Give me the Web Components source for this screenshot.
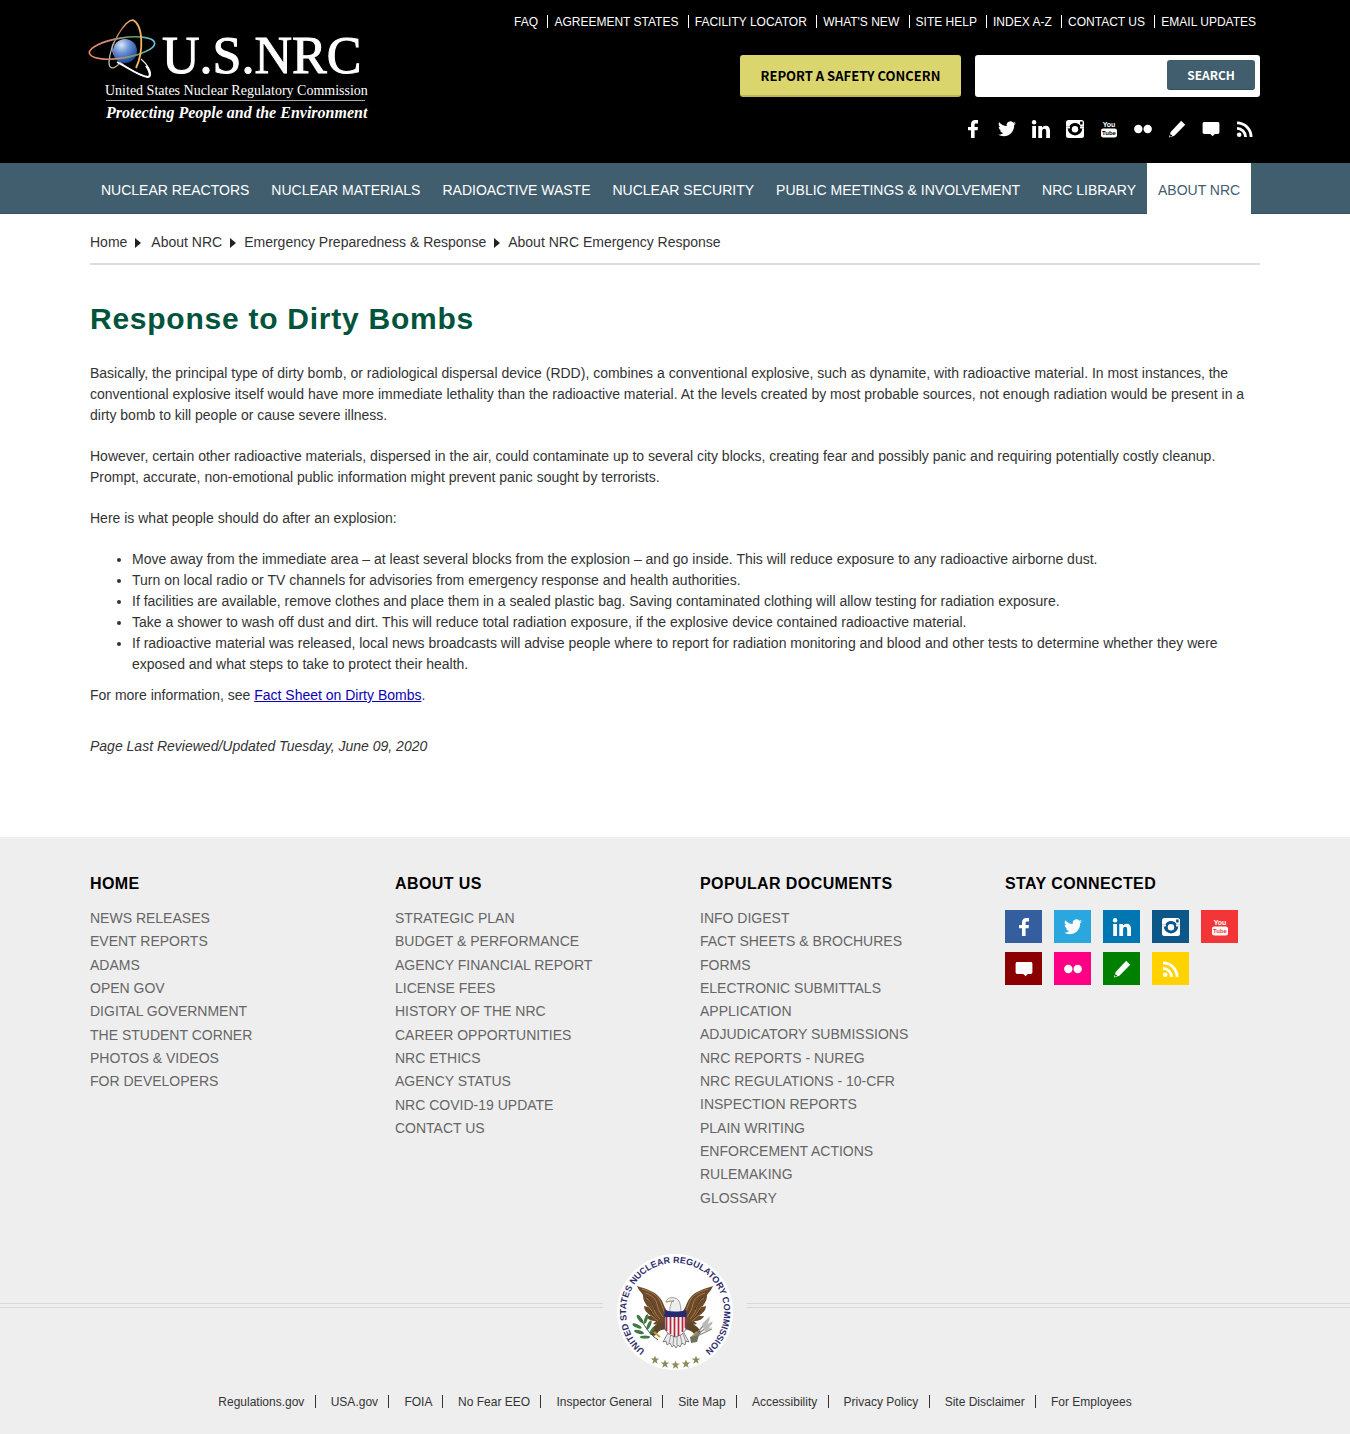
<!DOCTYPE html>
<html lang="en">
<head>
<meta charset="utf-8">
<title>NRC: Response to Dirty Bombs</title>
<meta name="viewport" content="width=device-width, initial-scale=1">
<style>
body{margin:0;background:#fff;color:#333;font:14px/21px "Liberation Sans",Arial,sans-serif}
</style>
</head>
<body>
<nrc-header></nrc-header>
<nrc-nav>
  <a href="#">NUCLEAR REACTORS</a><a href="#">NUCLEAR MATERIALS</a><a href="#">RADIOACTIVE WASTE</a><a href="#">NUCLEAR SECURITY</a><a href="#">PUBLIC MEETINGS &amp; INVOLVEMENT</a><a href="#">NRC LIBRARY</a><a href="#" aria-current="page">ABOUT NRC</a>
</nrc-nav>
<nrc-article></nrc-article>
<nrc-footer></nrc-footer>

<script>
const define = (name, html) => {
  const t = document.createElement('template');
  t.innerHTML = html;
  customElements.define(name, class extends HTMLElement {
    constructor() {
      super();
      this.attachShadow({mode: 'open'}).append(t.content.cloneNode(true));
    }
  });
};
const wrap = '.wrap{width:min(1170px,100% - 32px);margin:0 auto}';

/* Social icons, all on a 24-unit grid */
const icons = {
  facebook: ['Facebook', '<path d="M17 3v3.4h-2c-1 0-1.4.5-1.4 1.4V10H17l-.4 3.2h-3V21H10v-7.8H7V10h3V7.4C10 4.500 11.700 3 14.300 3z"/>'],
  twitter: ['Twitter', '<path d="M21 6.200c-.7.3-1.400.5-2.100.6.8-.5 1.300-1.200 1.600-2-.7.4-1.500.7-2.300.9A3.700 3.700 0 0 0 11.800 9C8.800 8.900 6.100 7.400 4.200 5.200c-1 1.700-.5 3.900 1.200 5-.6 0-1.200-.2-1.700-.5 0 1.800 1.200 3.300 2.900 3.700-.5.1-1.100.2-1.600.1.500 1.500 1.800 2.500 3.400 2.500A7.500 7.500 0 0 1 3 17.600C10.300 22 19.400 17.300 19.200 8.100c.7-.5 1.300-1.200 1.800-1.900z"/>'],
  linkedin: ['LinkedIn', '<circle cx="5.100" cy="5.200" r="2.200"/><path d="M3.200 9H7v12H3.200zM9.300 9H13v1.700c.8-1.300 2-2 3.700-2 3 0 4.300 2 4.300 5.100V21h-3.800v-6.500c0-1.700-.5-2.700-1.900-2.700-1.500 0-2.200 1-2.200 2.700V21H9.300z"/>'],
  instagram: ['Instagram', '<path fill-rule="evenodd" d="M5.500 3h13A2.500 2.500 0 0 1 21 5.500v4h-3.300A6.300 6.300 0 0 0 6.300 9.500H3v-4A2.500 2.500 0 0 1 5.500 3zm11.600 1.600v3h2.500v-3zM3 11.200h1.700a7.300 7.300 0 0 0 14.600 0H21v7.300a2.500 2.500 0 0 1-2.500 2.500h-13A2.500 2.500 0 0 1 3 18.500z"/><path d="M3 9.500h4v2H3zM17 9.500h4v2h-4z"/><path fill-rule="evenodd" d="M12 6.800a5.400 5.400 0 1 1 0 10.800 5.400 5.400 0 0 1 0-10.800zm0 2a3.400 3.400 0 1 0 0 6.800 3.400 3.400 0 0 0 0-6.800z" style="fill:var(--icon-bg,#000)"/><circle cx="12" cy="12.200" r="3.200"/>'],
  youtube: ['YouTube', '<text x="12" y="10" text-anchor="middle" font-size="7" font-weight="700" font-family="Liberation Sans,sans-serif">You</text><rect x="4" y="11.500" width="16" height="9" rx="2.200"/><text x="12" y="18.200" text-anchor="middle" font-size="6" font-weight="700" font-family="Liberation Sans,sans-serif" style="fill:var(--icon-bg,#000)">Tube</text>'],
  flickr: ['Flickr', '<circle cx="7.300" cy="12" r="4.200"/><circle cx="16.700" cy="12" r="4.200"/>'],
  blog: ['Blog', '<path d="M16.200 3.800 20.200 7.800 9.400 18.700 4 20.500l1.700-5.600z"/><path d="m5.400 16.800 2 2-2.500.9z" style="fill:var(--icon-bg,#000)"/>'],
  comment: ['Comment', '<path d="M5.300 5h13.400c1 0 1.700.7 1.700 1.700v8.600c0 1-.7 1.700-1.700 1.700h-3l-2 2.200-2.400-2.200H5.300c-1 0-1.700-.7-1.700-1.700V6.700C3.600 5.700 4.300 5 5.300 5z"/>'],
  rss: ['RSS', '<circle cx="6.200" cy="17.800" r="2.300"/><path d="M4 10v2.800a7.200 7.200 0 0 1 7.200 7.200H14A10 10 0 0 0 4 10z"/><path d="M4 4.500v2.800A12.700 12.700 0 0 1 16.700 20h2.800A15.500 15.500 0 0 0 4 4.500z"/>']
};
customElements.define('nrc-icon', class extends HTMLElement {
  constructor() {
    super();
    this.attachShadow({mode: 'open'});
  }
  connectedCallback() {
    const [label, shape] = icons[this.getAttribute('name')];
    this.shadowRoot.innerHTML = `<style>:host{display:block}a{display:flex;align-items:center;justify-content:center;height:100%;color:#fff}</style>
      <a href="#" aria-label="${label}"><svg width="24" height="24" viewBox="0 0 24 24" fill="currentColor" aria-hidden="true">${shape}</svg></a>`;
  }
});

/* Row of links with a bar between neighbours */
define('nrc-link-row', `<style>
:host{display:block}
::slotted(a){color:inherit;text-decoration:none;white-space:nowrap}
::slotted(a:not(:first-child)){padding-left:var(--after,7px);margin-left:var(--before,6px);background:linear-gradient(currentColor,currentColor) 0 0/1px 13px no-repeat}
</style><slot></slot>`);

define('nrc-logo', `<style>
:host{display:block}svg{display:block}
</style>
<svg width="284" height="110" viewBox="0 0 284 110" role="img" aria-label="U.S. NRC logo">
  <defs>
    <radialGradient id="core" cx=".35" cy=".25" r=".8"><stop offset="0" stop-color="#dce8fa"/><stop offset=".4" stop-color="#6f96d4"/><stop offset="1" stop-color="#123f93"/></radialGradient>
    <linearGradient id="wide"><stop offset="0" stop-color="#f08a68"/><stop offset=".35" stop-color="#c98a7c"/><stop offset=".75" stop-color="#5fa06d"/><stop offset="1" stop-color="#6bc8ef"/></linearGradient>
    <linearGradient id="tall"><stop offset="0" stop-color="#a9cdb9"/><stop offset=".5" stop-color="#cf8552"/><stop offset="1" stop-color="#ffd78e"/></linearGradient>
    <linearGradient id="low"><stop offset="0" stop-color="#9d72ad"/><stop offset="1" stop-color="#fff"/></linearGradient>
  </defs>
  <g fill="none">
    <path d="M26 24c-6 8 3 19 14 26 11 7 20 11 22 8 2-4-3-12-9-17" stroke="url(#low)" stroke-width="1.200"/>
    <path d="M45 2C37 2 22 26 21 44c0 7 4 8 10 2" stroke="url(#tall)" stroke-width="1.300"/>
    <circle cx="37" cy="33" r="12" fill="url(#core)"/>
    <ellipse cx="34" cy="30" rx="33" ry="10" transform="rotate(-9 34 30)" stroke="url(#wide)" stroke-width="1.600"/>
    <path d="M45 2c10 5 11 31 3 48" stroke="#f3b565" stroke-width="1.800"/>
    <path d="M29 44c10 5 22 14 31 15 3 0 2-6-2-11" stroke="#fff" stroke-width="1.900"/>
  </g>
  <g fill="#fff" font-family="Liberation Serif,Times New Roman,serif">
    <text x="74" y="55" font-size="52" stroke="#fff">U.S.NRC</text>
    <text x="17" y="77" font-size="14">United States Nuclear Regulatory Commission</text>
    <path d="M18 82.500h259" stroke="#aaa"/>
    <text x="18" y="100" font-size="16" font-weight="700" font-style="italic">Protecting People and the Environment</text>
  </g>
</svg>`);

define('nrc-header', `<style>
:host{display:block;background:#000;color:#fff}${wrap}
.wrap{display:flex;justify-content:space-between;min-height:163px}
nrc-logo{margin:18px 0 0 -2px}
.tools{display:flex;flex-direction:column;align-items:flex-end}
nrc-link-row{font-size:12px;line-height:16px;margin:14px 4px 0 0}
.row{display:flex;gap:14px;margin-top:25px}
button{font:700 13px/18px "Noto Sans CJK JP","Open Sans",sans-serif;border:0;border-radius:3px;cursor:pointer}
.report{background:#dbd56e;color:#000;padding:1px 0 0;width:221px;height:42px;border-bottom:2px solid #bcb659}
form{display:flex;box-sizing:border-box;width:285px;height:42px;padding:5px;background:#fff;border-radius:3px}
input{flex:1;min-width:0;border:0;background:none;font:inherit;outline:0;height:32px;padding:0 8px}
form button{background:#415e6f;color:#fff;width:88px;height:30px;padding:0;font-size:12px;border-bottom:1px solid #34505f}
.social{display:flex;gap:10px;margin:20px 3px 0 0}
.social nrc-icon{width:24px;height:24px}
</style>
<div class="wrap">
  <nrc-logo></nrc-logo>
  <div class="tools">
    <nrc-link-row><a href="#">FAQ</a> <a href="#">AGREEMENT STATES</a> <a href="#">FACILITY LOCATOR</a> <a href="#">WHAT'S NEW</a> <a href="#">SITE HELP</a> <a href="#">INDEX A-Z</a> <a href="#">CONTACT US</a> <a href="#">EMAIL UPDATES</a></nrc-link-row>
    <div class="row">
      <button class="report" type="button">REPORT A SAFETY CONCERN</button>
      <form role="search"><input type="text" aria-label="Search"><button type="button">SEARCH</button></form>
    </div>
    <div class="social"><nrc-icon name="facebook"></nrc-icon><nrc-icon name="twitter"></nrc-icon><nrc-icon name="linkedin"></nrc-icon><nrc-icon name="instagram"></nrc-icon><nrc-icon name="youtube"></nrc-icon><nrc-icon name="flickr"></nrc-icon><nrc-icon name="blog"></nrc-icon><nrc-icon name="comment"></nrc-icon><nrc-icon name="rss"></nrc-icon></div>
  </div>
</div>`);

define('nrc-nav', `<style>
:host{display:block;background:#415e6f;box-shadow:inset 0 -1px #3a5060}${wrap}
.wrap{display:flex;flex-wrap:wrap}
::slotted(a){color:#fff;text-decoration:none;padding:17px 11px 13px;white-space:nowrap}
::slotted(a[aria-current]){background:#fff;color:#415e6f}
</style><nav class="wrap"><slot></slot></nav>`);

define('nrc-breadcrumb', `<style>
:host{display:flex;flex-wrap:wrap;align-items:center;gap:8px;padding:18px 0 10px;border-bottom:2px solid #ddd}
a{color:#333;text-decoration:none}
i{border:solid transparent;border-width:5px 0 5px 6px;border-left-color:#222}
a:nth-of-type(2){margin-left:2px}
</style><a href="#">Home</a><i></i><a href="#">About NRC</a><i></i><a href="#">Emergency Preparedness &amp; Response</a><i></i><a href="#">About NRC Emergency Response</a>`);

define('nrc-article', `<style>
:host{display:block}${wrap}
h1{margin:35px 0 25px;font-size:30px;line-height:38px;letter-spacing:.025em;color:#00543c}
p{margin:0 0 20px}
ul{margin:0 0 10px;padding-left:42px}
.info{margin-bottom:30px}.info a{color:#0b00b4}
.date{margin-bottom:80px;font-style:italic}
</style>
<main class="wrap">
<nrc-breadcrumb></nrc-breadcrumb>
<h1>Response to Dirty Bombs</h1>
<p>Basically, the principal type of dirty bomb, or radiological dispersal device (RDD), combines a conventional explosive, such as dynamite, with radioactive material. In most instances, the conventional explosive itself would have more immediate lethality than the radioactive material. At the levels created by most probable sources, not enough radiation would be present in a dirty bomb to kill people or cause severe illness.</p>
<p>However, certain other radioactive materials, dispersed in the air, could contaminate up to several city blocks, creating fear and possibly panic and requiring potentially costly cleanup. Prompt, accurate, non-emotional public information might prevent panic sought by terrorists.</p>
<p>Here is what people should do after an explosion:</p>
<ul>
<li>Move away from the immediate area – at least several blocks from the explosion – and go inside. This will reduce exposure to any radioactive airborne dust.</li>
<li>Turn on local radio or TV channels for advisories from emergency response and health authorities.</li>
<li>If facilities are available, remove clothes and place them in a sealed plastic bag. Saving contaminated clothing will allow testing for radiation exposure.</li>
<li>Take a shower to wash off dust and dirt. This will reduce total radiation exposure, if the explosive device contained radioactive material.</li>
<li>If radioactive material was released, local news broadcasts will advise people where to report for radiation monitoring and blood and other tests to determine whether they were exposed and what steps to take to protect their health.</li>
</ul>
<p class="info">For more information, see <a href="#">Fact Sheet on Dirty Bombs</a>.</p>
<p class="date">Page Last Reviewed/Updated Tuesday, June 09, 2020</p>
</main>`);

define('nrc-footer-column', `<style>
:host{display:block}
h2{margin:0 0 12px;font-size:16px;line-height:22px;letter-spacing:.025em;color:#000}
::slotted(a){display:block;color:#666;text-decoration:none;line-height:23px}
::slotted(a:nth-of-type(3n+2)){margin-bottom:1px}
</style><h2><slot name="title"></slot></h2><slot></slot>`);

define('nrc-seal', `<style>:host{display:block}svg{display:block}</style>
<svg width="118" height="118" viewBox="0 0 118 118" role="img" aria-label="Seal of the United States Nuclear Regulatory Commission">
  <defs>
    <path id="ring" d="M30.900 99.100A49 49 0 1 1 87.100 99.100"/>
    <path id="star" d="M0-4.500 1.100-1.400H4.300L1.700.6 2.700 3.800 0 1.900-2.700 3.800-1.700.6-4.300-1.400H-1.100z"/>
  </defs>
  <circle cx="59" cy="59" r="58" fill="#fff"/>
  <text font-family="Liberation Sans,Arial,sans-serif" font-weight="700" font-size="9" fill="#2f2c6b"><textPath href="#ring" startOffset="50%" text-anchor="middle">UNITED STATES NUCLEAR REGULATORY COMMISSION</textPath></text>
  <g fill="#8b8a58"><use href="#star" x="39" y="107"/><use href="#star" x="49" y="111"/><use href="#star" x="59.500" y="112"/><use href="#star" x="70" y="111"/><use href="#star" x="80" y="107"/></g>
  <g id="wing">
    <path d="M21 33c10 3 19 6 23 12 4 5 4 10 8 14l-1 11c-5 2-10 2-14 1l3-3c-5 0-9-2-10-5l5 0c-4-3-7-6-7-10l4 1c-4-5-5-8-5-12-3-4-5-6-6-9z" fill="#6b4a2c"/>
    <path d="M26 36c7 2 14 5 17 10 4 7 4 13 8 17M29 40c7 2 11 6 12 11 1 5 3 9 6 13M30 45c4 2 7 6 8 11 1 4 3 7 6 10M32 53c3 3 5 8 9 13M35 62l7 6" fill="none" stroke="#a67c46" stroke-width="1"/>
    <path d="M31 44c4 3 6 8 8 13M34 57c2 4 5 7 7 9" fill="none" stroke="#38281c" stroke-width=".8"/>
  </g>
  <use href="#wing" transform="matrix(-1 0 0 1 118 0)"/>
  <path d="M49 73c-5 0-9 2-11 6M69 73c5 0 9 2 12 6" stroke="#5d452a" stroke-width="7" fill="none" stroke-linecap="round"/>
  <path d="M38 79l6 5M81 79l-6 6" stroke="#d09a38" stroke-width="2"/>
  <path d="M54 60c-1-5 1-9 2-12l-6 1c1-4 5-5 9-4 5 1 6 8 6 15z" fill="#ededed" stroke="#888" stroke-width=".8"/>
  <path d="M50 49l5-1" stroke="#c99a2c"/><circle cx="57" cy="48" r=".7" fill="#333"/>
  <path d="m52 80-5 9 3-1 1 4 3-2 2 4 2-2 2 3 2-3 2 2 2-4 3 2 1-4 3 1-5-9z" fill="#e9e9e9" stroke="#666" stroke-width=".8"/>
  <path d="m55 81-2 9m5-9-1 11m4-11v11m3-11 2 10m1-10 3 8" stroke="#777" stroke-width=".7"/>
  <path d="M49 62h21v12c0 5-4 8-10.500 10C53 82 49 79 49 74z" fill="#f6f1f0"/>
  <path d="M50.500 62v16m4-16v19m4-19v22m4-22v21m4-21v17m3-17v13" stroke="#b4233d" stroke-width="1.700"/>
  <path d="M48.500 57c7 2 14 2 22 0v7h-22z" fill="#242b72"/>
  <path d="M49 64v10c0 5 4 8 10.500 10C66 82 70 79 70 74V64" fill="none" stroke="#59576a" stroke-width=".7"/>
  <g fill="#427746"><ellipse cx="24" cy="66" rx="5" ry="1.800" transform="rotate(55 24 66)"/><ellipse cx="30" cy="66" rx="5" ry="1.600" transform="rotate(110 30 66)"/><ellipse cx="21" cy="73" rx="5" ry="1.700" transform="rotate(25 21 73)"/><ellipse cx="33" cy="72" rx="5" ry="1.600" transform="rotate(115 33 72)"/><ellipse cx="23" cy="79" rx="5" ry="1.700" transform="rotate(15 23 79)"/><ellipse cx="36" cy="78" rx="4" ry="1.500" transform="rotate(115 36 78)"/><ellipse cx="29" cy="84" rx="5" ry="1.500"/></g>
  <path d="M25 66c4 9 10 16 17 21" stroke="#2f5938" fill="none"/>
  <path d="m75 87 18-21M77 85 96 70M79 84l17-8" stroke="#8a8b82" stroke-width="1.300"/>
  <path d="m86 71 8-8-2 8 5-3-4 7 4-1-8 5z" fill="#b9bbb5"/>
  <path d="m74 84 9-2-2 7-6 1z" fill="#6f725f"/>
</svg>`);

define('nrc-footer', `<style>
:host{display:block;background:#eee}${wrap}
.cols{display:grid;grid-template-columns:repeat(4,1fr);gap:50px;padding-top:36px}
.tiles{display:flex;flex-wrap:wrap;gap:9px 12px;padding-top:3px}
.tiles nrc-icon{width:37px;height:33px;background:var(--icon-bg)}
.rule{display:flex;align-items:center;gap:13px;margin-top:43px}
.rule::before,.rule::after{content:"";flex:1;height:3px;border:solid #d8d8d8;border-width:1px 0;margin-bottom:14px}
nrc-link-row{text-align:center;font-size:12px;line-height:16px;padding:23px 0 25px;--before:7px;--after:16px}
</style>
<footer>
<div class="wrap cols">
<nrc-footer-column><span slot="title">HOME</span><a href="#">NEWS RELEASES</a><a href="#">EVENT REPORTS</a><a href="#">ADAMS</a><a href="#">OPEN GOV</a><a href="#">DIGITAL GOVERNMENT</a><a href="#">THE STUDENT CORNER</a><a href="#">PHOTOS &amp; VIDEOS</a><a href="#">FOR DEVELOPERS</a></nrc-footer-column>
<nrc-footer-column><span slot="title">ABOUT US</span><a href="#">STRATEGIC PLAN</a><a href="#">BUDGET &amp; PERFORMANCE</a><a href="#">AGENCY FINANCIAL REPORT</a><a href="#">LICENSE FEES</a><a href="#">HISTORY OF THE NRC</a><a href="#">CAREER OPPORTUNITIES</a><a href="#">NRC ETHICS</a><a href="#">AGENCY STATUS</a><a href="#">NRC COVID-19 UPDATE</a><a href="#">CONTACT US</a></nrc-footer-column>
<nrc-footer-column><span slot="title">POPULAR DOCUMENTS</span><a href="#">INFO DIGEST</a><a href="#">FACT SHEETS &amp; BROCHURES</a><a href="#">FORMS</a><a href="#">ELECTRONIC SUBMITTALS APPLICATION</a><a href="#">ADJUDICATORY SUBMISSIONS</a><a href="#">NRC REPORTS - NUREG</a><a href="#">NRC REGULATIONS - 10-CFR</a><a href="#">INSPECTION REPORTS</a><a href="#">PLAIN WRITING</a><a href="#">ENFORCEMENT ACTIONS</a><a href="#">RULEMAKING</a><a href="#">GLOSSARY</a></nrc-footer-column>
<nrc-footer-column><span slot="title">STAY CONNECTED</span><div class="tiles">
<nrc-icon name="facebook" style="--icon-bg:#355e9f"></nrc-icon><nrc-icon name="twitter" style="--icon-bg:#2ba7e0"></nrc-icon><nrc-icon name="linkedin" style="--icon-bg:#0077b3"></nrc-icon><nrc-icon name="instagram" style="--icon-bg:#0d5688"></nrc-icon><nrc-icon name="youtube" style="--icon-bg:#f33538"></nrc-icon><nrc-icon name="comment" style="--icon-bg:#8b0000"></nrc-icon><nrc-icon name="flickr" style="--icon-bg:#ff0084"></nrc-icon><nrc-icon name="blog" style="--icon-bg:#008000"></nrc-icon><nrc-icon name="rss" style="--icon-bg:#ffd200"></nrc-icon></div></nrc-footer-column>
</div>
<div class="rule"><nrc-seal></nrc-seal></div>
<nrc-link-row><a href="#">Regulations.gov</a> <a href="#">USA.gov</a> <a href="#">FOIA</a> <a href="#">No Fear EEO</a> <a href="#">Inspector General</a> <a href="#">Site Map</a> <a href="#">Accessibility</a> <a href="#">Privacy Policy</a> <a href="#">Site Disclaimer</a> <a href="#">For Employees</a></nrc-link-row>
</footer>`);
</script>
</body>
</html>
